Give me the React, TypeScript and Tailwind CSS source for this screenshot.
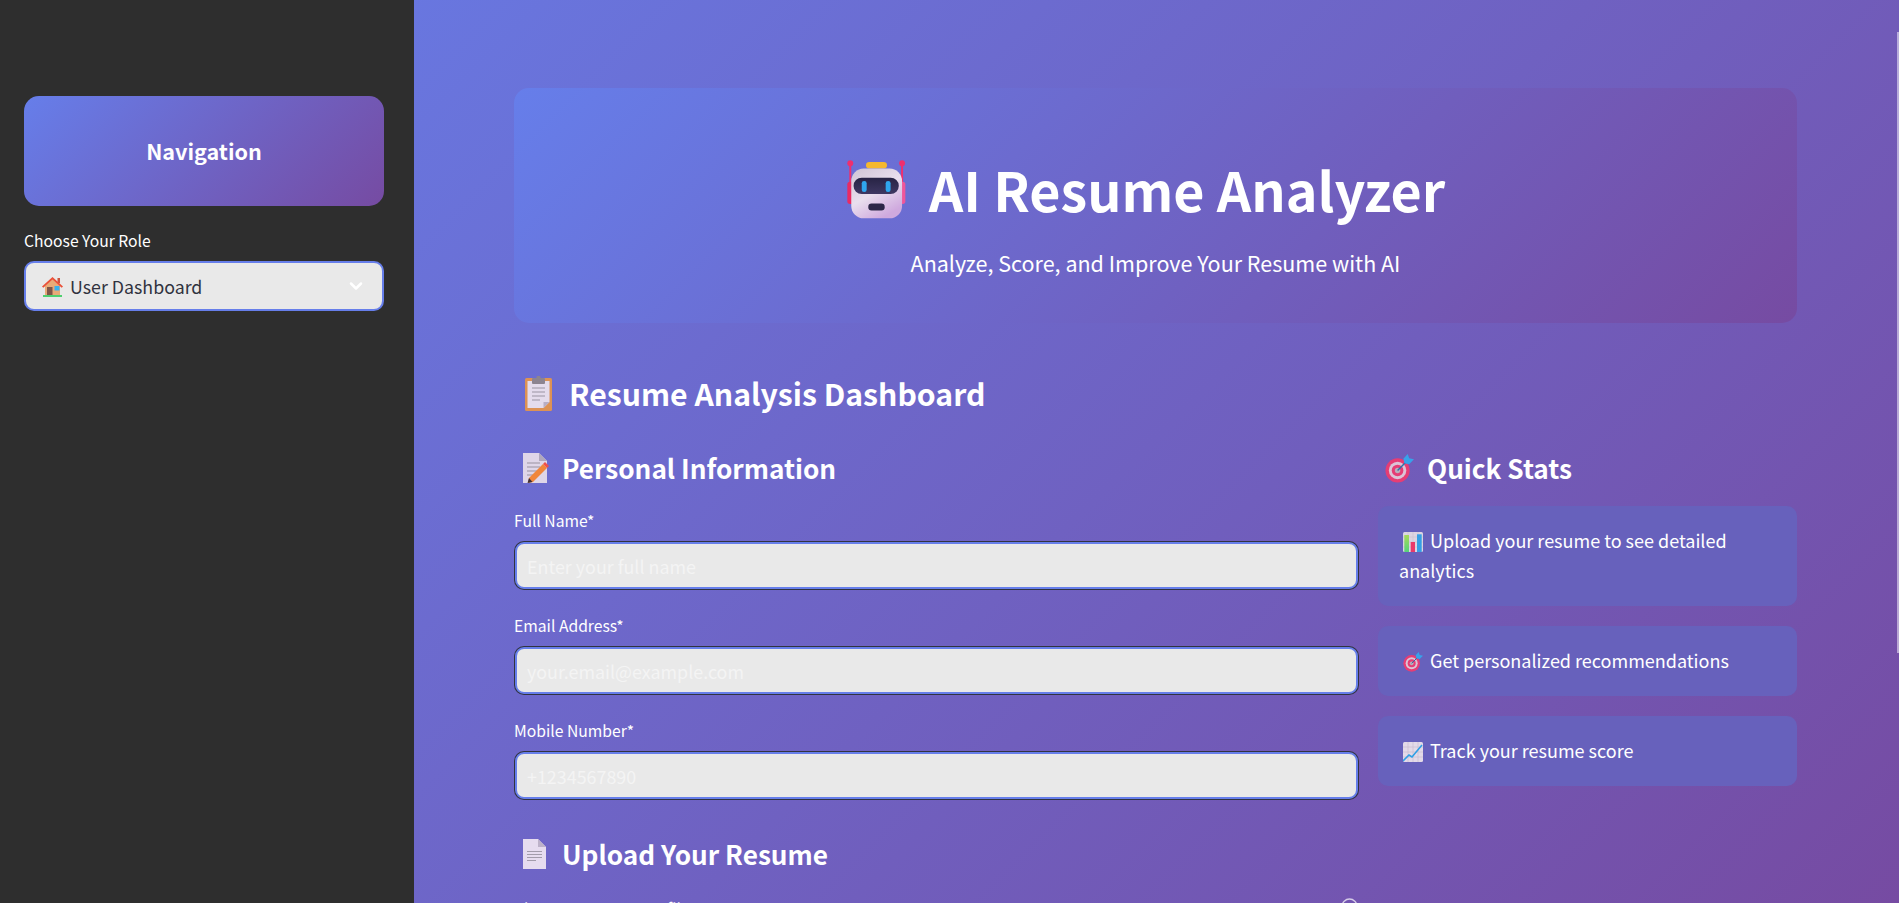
import React from 'react';
import { ChevronDown } from 'lucide-react';

const FONT = '[font-family:"Noto_Sans_CJK_SC","Noto_Sans",sans-serif]';

function RobotIcon({ className }: { className?: string }) {
  return (
    <svg viewBox="50 42 180 180" className={className} aria-hidden="true">
      <defs>
        <linearGradient id="robotBody" x1="0" y1="0" x2="0.6" y2="1">
          <stop offset="0" stopColor="#cfc4d4" />
          <stop offset="0.55" stopColor="#e9dfee" />
          <stop offset="1" stopColor="#cfa9de" />
        </linearGradient>
        <linearGradient id="robotVisor" x1="0" y1="0" x2="0" y2="1">
          <stop offset="0" stopColor="#272344" />
          <stop offset="1" stopColor="#3f3863" />
        </linearGradient>
      </defs>
      <rect x="57" y="55" width="6" height="70" fill="#ef2f6f" />
      <rect x="215" y="55" width="6" height="70" fill="#ef2f6f" />
      <circle cx="60" cy="52" r="9" fill="#ef2f6f" />
      <circle cx="218" cy="52" r="9" fill="#ef2f6f" />
      <rect x="51" y="108" width="20" height="68" rx="8" fill="#e92a63" />
      <rect x="208" y="108" width="20" height="68" rx="8" fill="#f0569a" />
      <rect x="108" y="48" width="64" height="20" rx="10" fill="#f5b82e" />
      <rect x="63" y="68" width="155" height="152" rx="38" fill="url(#robotBody)" />
      <rect x="70" y="96" width="138" height="50" rx="25" fill="url(#robotVisor)" />
      <rect x="95" y="106" width="15" height="34" rx="7" fill="#2fa6ee" />
      <rect x="168" y="106" width="15" height="34" rx="7" fill="#2fa6ee" />
      <rect x="115" y="175" width="50" height="21" rx="10" fill="#2c2748" />
    </svg>
  );
}

function ClipboardIcon({ className }: { className?: string }) {
  return (
    <svg viewBox="0 0 27 35" className={className} aria-hidden="true">
      <rect x="0" y="2" width="27" height="33" rx="1.500" fill="#dd9254" />
      <path d="M2.500 5h22v21l-6 6H2.500z" fill="#e4dcec" />
      <path d="M24.500 26l-6 6v-6z" fill="#b8aec4" />
      <rect x="7" y="2" width="13" height="6" rx="1" fill="#8c8490" />
      <rect x="11.500" y="0" width="4" height="4" rx="1" fill="#8c8490" />
      <path d="M7 12h13M7 16h13M7 20h13M7 24h8" stroke="#9a94a2" strokeWidth="1.200" />
    </svg>
  );
}

function MemoIcon({ className }: { className?: string }) {
  return (
    <svg viewBox="0 0 26 30" className={className} aria-hidden="true">
      <path d="M0 0h16l8 8v22H0z" fill="#dfd6e8" />
      <path d="M16 0l8 8h-8z" fill="#b0a8bc" />
      <path d="M4 10h13M4 14h13M4 18h11M4 22h6" stroke="#99929f" strokeWidth="1.200" />
      <path d="M6 25L20 11l4 4-14 14-5 1z" fill="#f0863a" />
      <path d="M20 11l2-2 4 4-2 2z" fill="#f0504a" />
      <path d="M6 25l-1.500 5 5-1z" fill="#3c3038" />
    </svg>
  );
}

function DocumentIcon({ className }: { className?: string }) {
  return (
    <svg viewBox="0 0 23 30" className={className} aria-hidden="true">
      <path d="M0 0h15l8 8v22H0z" fill="#e6dcef" />
      <path d="M15 0l8 8h-8z" fill="#bdb2c9" />
      <path d="M4 12.500h15M4 15.500h15M4 18.500h15M4 21.500h9" stroke="#a39cab" strokeWidth="1.200" />
    </svg>
  );
}

function TargetIcon({ className }: { className?: string }) {
  return (
    <svg viewBox="0 0 30 30" className={className} aria-hidden="true">
      <circle cx="13" cy="17" r="12.500" fill="#e63d74" />
      <circle cx="13" cy="17" r="9" fill="#dcc4d6" />
      <circle cx="13" cy="17" r="6" fill="#e63d74" />
      <circle cx="13" cy="17" r="2.800" fill="#b9afbb" />
      <path d="M13 17L24 6" stroke="#2f6fa8" strokeWidth="1.500" />
      <path d="M19 5l4.500-5 1.500 4.500 5 1-5 5-5-1z" fill="#38a2ea" />
    </svg>
  );
}

function BarChartIcon({ className }: { className?: string }) {
  return (
    <svg viewBox="0 0 20 20" className={className} aria-hidden="true">
      <defs>
        <linearGradient id="barGreen" x1="0" y1="0" x2="0" y2="1">
          <stop offset="0" stopColor="#a8d95a" />
          <stop offset="1" stopColor="#55d27c" />
        </linearGradient>
      </defs>
      <rect width="20" height="20" rx="1.500" fill="#dcd5e2" />
      <path d="M0 5h20M0 10h20M0 15h20M5 0v20M10 0v20M15 0v20" stroke="#c4bccb" strokeWidth="0.500" />
      <rect x="1.300" y="3" width="4.700" height="17" fill="url(#barGreen)" />
      <rect x="7.700" y="10" width="4.300" height="10" fill="#ea3a6a" />
      <rect x="14" y="2.300" width="4.700" height="17.700" fill="#35a0e6" />
    </svg>
  );
}

function TrendIcon({ className }: { className?: string }) {
  return (
    <svg viewBox="0 0 20 20" className={className} aria-hidden="true">
      <rect width="20" height="20" rx="1.500" fill="#e3dae8" />
      <path d="M0 5h20M0 10h20M0 15h20M5 0v20M10 0v20M15 0v20" stroke="#c6bbcd" strokeWidth="0.600" />
      <path d="M0 19l6-6 3 2 10-12" fill="none" stroke="#2f9fe6" strokeWidth="1.600" />
    </svg>
  );
}

function HouseIcon({ className }: { className?: string }) {
  return (
    <svg viewBox="0 0 21 20" className={className} aria-hidden="true">
      <rect x="15.500" y="1" width="2.500" height="5" fill="#c9553f" />
      <path d="M3 9l7.500-7L18 9v9H3z" fill="#e8ab78" />
      <path d="M0 9.500L10.500 0 21 9.500l-1.300 1.300-9.200-8.300-9.200 8.300z" fill="#ea5038" />
      <rect x="5" y="10" width="5.500" height="8" fill="#7f5548" />
      <rect x="12.500" y="9" width="5" height="4.500" fill="#38b0ee" />
      <rect x="1" y="18" width="19" height="2" fill="#4fd070" />
    </svg>
  );
}

function TextField({ label, placeholder }: { label: string; placeholder: string }) {
  return (
    <div className="flex flex-col">
      <label className="h-[21px] text-[15.700px] leading-[21px] text-white">{label}</label>
      <div className="mt-[10px] rounded-[10px] bg-[#31333f] p-px">
        <input
          placeholder={placeholder}
          className={`${FONT} h-[47px] w-full rounded-[9px] border-2 border-[#667eea] bg-[#e9e9e9] px-[10px] text-[17.900px] text-[#31333f] outline-none placeholder:text-[#f4f4f4]`}
        />
      </div>
    </div>
  );
}

function StatCard({ icon, children }: { icon: React.ReactNode; children: React.ReactNode }) {
  return (
    <div className="rounded-[10px] bg-[#6761bc] px-[21px] pb-[21px] pt-[19px] text-[18px] leading-[30px] text-white">
      <span className="ml-[4px] mr-[7px] inline-block align-[-4px]">{icon}</span>
      {children}
    </div>
  );
}

export default function App() {
  return (
    <div className={`${FONT} flex h-[903px] w-full overflow-hidden bg-[linear-gradient(135deg,#667eea_0%,#764ba2_100%)]`}>
      <aside className="flex w-[414px] shrink-0 flex-col bg-[#2e2e2e] pl-[24px] pr-[30px] pt-[96px]">
        <div className="flex h-[110px] items-center justify-center rounded-[15px] bg-[linear-gradient(135deg,#667eea_0%,#764ba2_100%)]">
          <h2 className="text-[21.600px] font-semibold leading-none text-white">Navigation</h2>
        </div>
        <label className="mt-[24px] h-[21px] text-[15.700px] leading-[21px] text-white">Choose Your Role</label>
        <div className="mt-[10px] flex h-[50px] items-center justify-between rounded-[10px] border-2 border-[#667eea] bg-[#e9e9e9] px-[16px] text-[#31333f]">
          <span className="flex items-center pt-[1px] text-[17.800px] leading-none">
            <HouseIcon className="mr-[7px] h-[20px] w-[21px]" />
            User Dashboard
          </span>
          <ChevronDown className="h-[20px] w-[20px] text-white" strokeWidth={3} />
        </div>
      </aside>

      <main className="relative min-w-0 flex-1 pl-[100px] pr-[102px] pt-[88px]">
        <header className="flex h-[235px] flex-col items-center rounded-[15px] bg-[linear-gradient(135deg,#667eea_0%,#764ba2_100%)] pt-[62px]">
          <h1 className="flex items-center pr-[19px] text-[53.800px] font-bold leading-[78px] text-white">
            <RobotIcon className="mr-[23px] h-[59px] w-[59px]" />
            AI Resume Analyzer
          </h1>
          <p className="mt-[20px] text-[21.500px] leading-[30px] text-white">Analyze, Score, and Improve Your Resume with AI</p>
        </header>

        <h2 className="mt-[46px] flex h-[48px] items-center pl-[11px] text-[30.200px] font-semibold leading-none text-white">
          <ClipboardIcon className="mr-[17px] h-[35px] w-[27px]" />
          Resume Analysis Dashboard
        </h2>

        <div className="mt-[28px] flex gap-[19px]">
          <div className="min-w-0 flex-[2]">
            <h3 className="flex h-[46px] items-center pl-[9px] text-[26.200px] font-semibold leading-none text-white">
              <MemoIcon className="mr-[13px] h-[30px] w-[26px]" />
              Personal Information
            </h3>
            <div className="mt-[19px] flex flex-col gap-[25px]">
              <TextField label="Full Name*" placeholder="Enter your full name" />
              <TextField label="Email Address*" placeholder="your.email@example.com" />
              <TextField label="Mobile Number*" placeholder="+1234567890" />
            </div>
            <h3 className="mt-[31px] flex h-[46px] items-center pl-[9px] text-[26.200px] font-semibold leading-none text-white">
              <DocumentIcon className="mr-[16px] h-[30px] w-[23px]" />
              Upload Your Resume
            </h3>
            <div className="mt-[21px] flex items-start justify-between">
              <label className="text-[15.700px] leading-[21px] text-white">Choose your resume file</label>
              <svg viewBox="0 0 16 16" className="mr-[1px] h-[17px] w-[17px] text-white/70" fill="none" stroke="currentColor" strokeWidth="1.300" aria-hidden="true">
                <circle cx="8" cy="8" r="7" />
              </svg>
            </div>
          </div>
          <div className="w-[419px] shrink-0">
            <h3 className="flex h-[46px] items-center pl-[7px] text-[26.200px] font-semibold leading-none text-white">
              <TargetIcon className="mr-[13px] h-[29px] w-[29px]" />
              Quick Stats
            </h3>
            <div className="mt-[15px] flex flex-col gap-[20px]">
              <StatCard icon={<BarChartIcon className="h-[20px] w-[20px]" />}>Upload your resume to see detailed analytics</StatCard>
              <StatCard icon={<TargetIcon className="h-[20px] w-[20px]" />}>Get personalized recommendations</StatCard>
              <StatCard icon={<TrendIcon className="h-[20px] w-[20px]" />}>Track your resume score</StatCard>
            </div>
          </div>
        </div>

        <div className="absolute right-0 top-[32px] h-[621px] w-[2px] bg-white/50" />
      </main>
    </div>
  );
}
